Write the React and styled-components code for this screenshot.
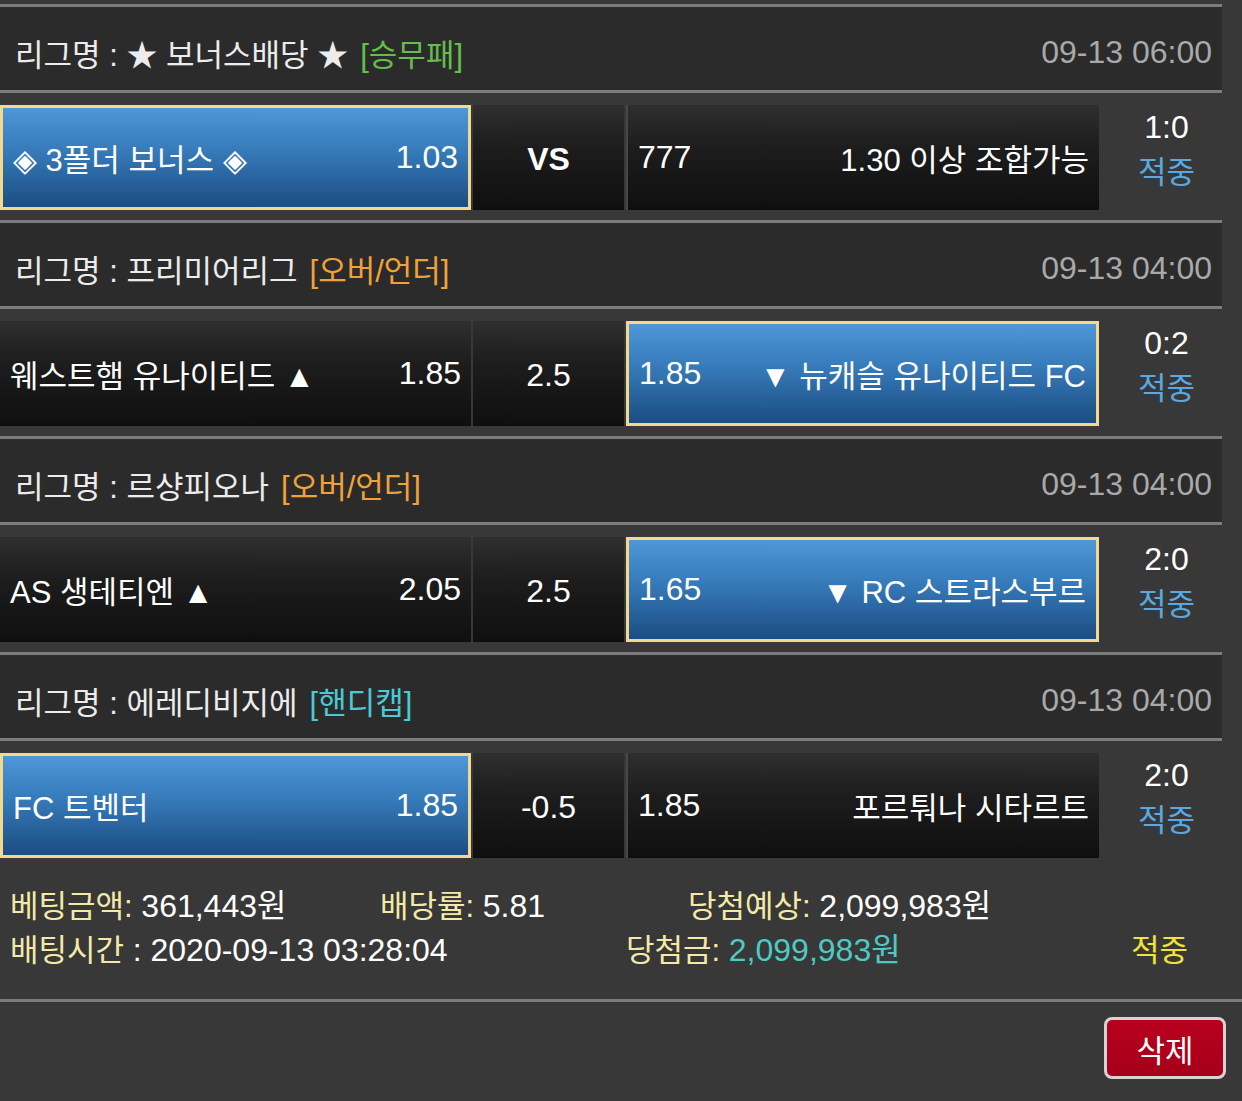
import React from "react";
import styled, { createGlobalStyle } from "styled-components";

const Global = createGlobalStyle`
  html, body { margin: 0; padding: 0; background: #383838; }
  body { font-family: "Liberation Sans", "Noto Sans CJK KR", Arial, sans-serif; color: #fff; }
`;

const Page = styled.div`
  width: 1242px;
  min-height: 1101px;
  background: #383838;
  padding-top: 4px;
  box-sizing: border-box;
`;

const List = styled.div`
  width: 1222px;
`;

const Block = styled.section`
  display: flex;
  flex-direction: column;
  padding-bottom: 10px;
`;

const Header = styled.div`
  height: 75px;
  padding: 8px 10px 0 15px;
  border-top: 3px solid #7c7c7c;
  border-bottom: 3px solid #7c7c7c;
  background: #2b2b2b;
  display: flex;
  align-items: center;
  justify-content: space-between;
  font-size: 31px;
  color: #ececec;
`;

const League = styled.span`
  white-space: nowrap;
`;

const Tag = styled.span`
  margin-left: 12px;
  color: ${(p) => p.$color};
`;

const DateText = styled.span`
  color: #a9a9a9;
  font-size: 32px;
`;

const Row = styled.div`
  margin-top: 12px;
  height: 105px;
  display: grid;
  grid-template-columns: 471px 151px 473px 1fr;
  column-gap: 2px;
`;

const Cell = styled.div`
  box-sizing: border-box;
  height: 105px;
  display: flex;
  align-items: center;
  justify-content: space-between;
  padding: 0 10px;
  font-size: 31px;
  color: #fff;
  white-space: nowrap;
  background: ${(p) =>
    p.$active
      ? "linear-gradient(to bottom, #4f97d8 0%, #3579b8 45%, #1c4d82 100%)"
      : "linear-gradient(to bottom, #2f2f2f 0%, #1d1d1d 40%, #0f0f0f 100%)"};
  border: ${(p) => (p.$active ? "3px solid #f2d98e" : "none")};
  border-left: ${(p) => (p.$divider ? "2px solid #484848" : "")};
`;

const Odds = styled.span`
  font-size: 32px;
`;

const Mid = styled(Cell)`
  justify-content: center;
  padding-top: 4px;
  font-size: 32px;
  font-weight: ${(p) => (p.$bold ? 700 : 400)};
`;

const Score = styled.div`
  display: flex;
  flex-direction: column;
  align-items: center;
  justify-content: center;
  padding: 0 0 16px 10px;
  font-size: 32px;
  line-height: 45px;
  color: #fff;
`;

const Hit = styled.span`
  color: ${(p) => p.$color || "#5aa9e2"};
  font-size: 31px;
`;

const Footer = styled.div`
  padding: 12px 0 31px 10px;
  font-size: 31px;
`;

const FooterLine = styled.div`
  display: grid;
  grid-template-columns: ${(p) => p.$cols};
  height: 44px;
  align-items: center;
  white-space: nowrap;
`;

const Label = styled.span`
  color: #f3eaa8;
`;

const Value = styled.span`
  color: ${(p) => p.$color || "#fff"};
  font-size: 32px;
`;

const Actions = styled.div`
  border-top: 3px solid #7c7c7c;
  display: flex;
  justify-content: flex-end;
  padding: 15px 16px 0 0;
`;

const DeleteButton = styled.button`
  width: 122px;
  height: 62px;
  box-sizing: border-box;
  border: 3px solid #d8d2d2;
  border-radius: 8px;
  background: linear-gradient(to bottom, #b8001e, #a5001a);
  color: #fff;
  font-family: inherit;
  font-size: 31px;
  cursor: pointer;
`;

const games = [
  {
    league: "★ 보너스배당 ★",
    tag: "[승무패]",
    tagColor: "#64bd4e",
    date: "09-13 06:00",
    home: "◈ 3폴더 보너스 ◈",
    homeOdds: "1.03",
    mid: "VS",
    bold: true,
    awayOdds: "777",
    away: "1.30 이상 조합가능",
    pick: "home",
    score: "1:0",
  },
  {
    league: "프리미어리그",
    tag: "[오버/언더]",
    tagColor: "#f0a23a",
    date: "09-13 04:00",
    home: "웨스트햄 유나이티드 ▲",
    homeOdds: "1.85",
    mid: "2.5",
    awayOdds: "1.85",
    away: "▼ 뉴캐슬 유나이티드 FC",
    pick: "away",
    score: "0:2",
  },
  {
    league: "르샹피오나",
    tag: "[오버/언더]",
    tagColor: "#f0a23a",
    date: "09-13 04:00",
    home: "AS 생테티엔 ▲",
    homeOdds: "2.05",
    mid: "2.5",
    awayOdds: "1.65",
    away: "▼ RC 스트라스부르",
    pick: "away",
    score: "2:0",
  },
  {
    league: "에레디비지에",
    tag: "[핸디캡]",
    tagColor: "#4cc9d4",
    date: "09-13 04:00",
    home: "FC 트벤터",
    homeOdds: "1.85",
    mid: "-0.5",
    awayOdds: "1.85",
    away: "포르퉈나 시타르트",
    pick: "home",
    score: "2:0",
  },
];

export default function App() {
  return (
    <Page>
      <Global />
      <List>
        {games.map((g, i) => (
          <Block key={i}>
            <Header>
              <League>
                리그명 : {g.league}
                <Tag $color={g.tagColor}>{g.tag}</Tag>
              </League>
              <DateText>{g.date}</DateText>
            </Header>
            <Row>
              <Cell $active={g.pick === "home"}>
                <span>{g.home}</span>
                <Odds>{g.homeOdds}</Odds>
              </Cell>
              <Mid $bold={g.bold}>{g.mid}</Mid>
              <Cell $active={g.pick === "away"} $divider={g.pick !== "away"}>
                <Odds>{g.awayOdds}</Odds>
                <span>{g.away}</span>
              </Cell>
              <Score>
                <span>{g.score}</span>
                <Hit>적중</Hit>
              </Score>
            </Row>
          </Block>
        ))}
      </List>
      <Footer>
        <FooterLine $cols="370px 308px auto">
          <span>
            <Label>베팅금액:</Label> <Value>361,443원</Value>
          </span>
          <span>
            <Label>배당률:</Label> <Value>5.81</Value>
          </span>
          <span>
            <Label>당첨예상:</Label> <Value>2,099,983원</Value>
          </span>
        </FooterLine>
        <FooterLine $cols="616px 505px auto">
          <span>
            <Label>배팅시간</Label> <Value>: 2020-09-13 03:28:04</Value>
          </span>
          <span>
            <Label>당첨금:</Label> <Value $color="#4ecac2">2,099,983원</Value>
          </span>
          <Hit $color="#f2e437">적중</Hit>
        </FooterLine>
      </Footer>
      <Actions>
        <DeleteButton>삭제</DeleteButton>
      </Actions>
    </Page>
  );
}
